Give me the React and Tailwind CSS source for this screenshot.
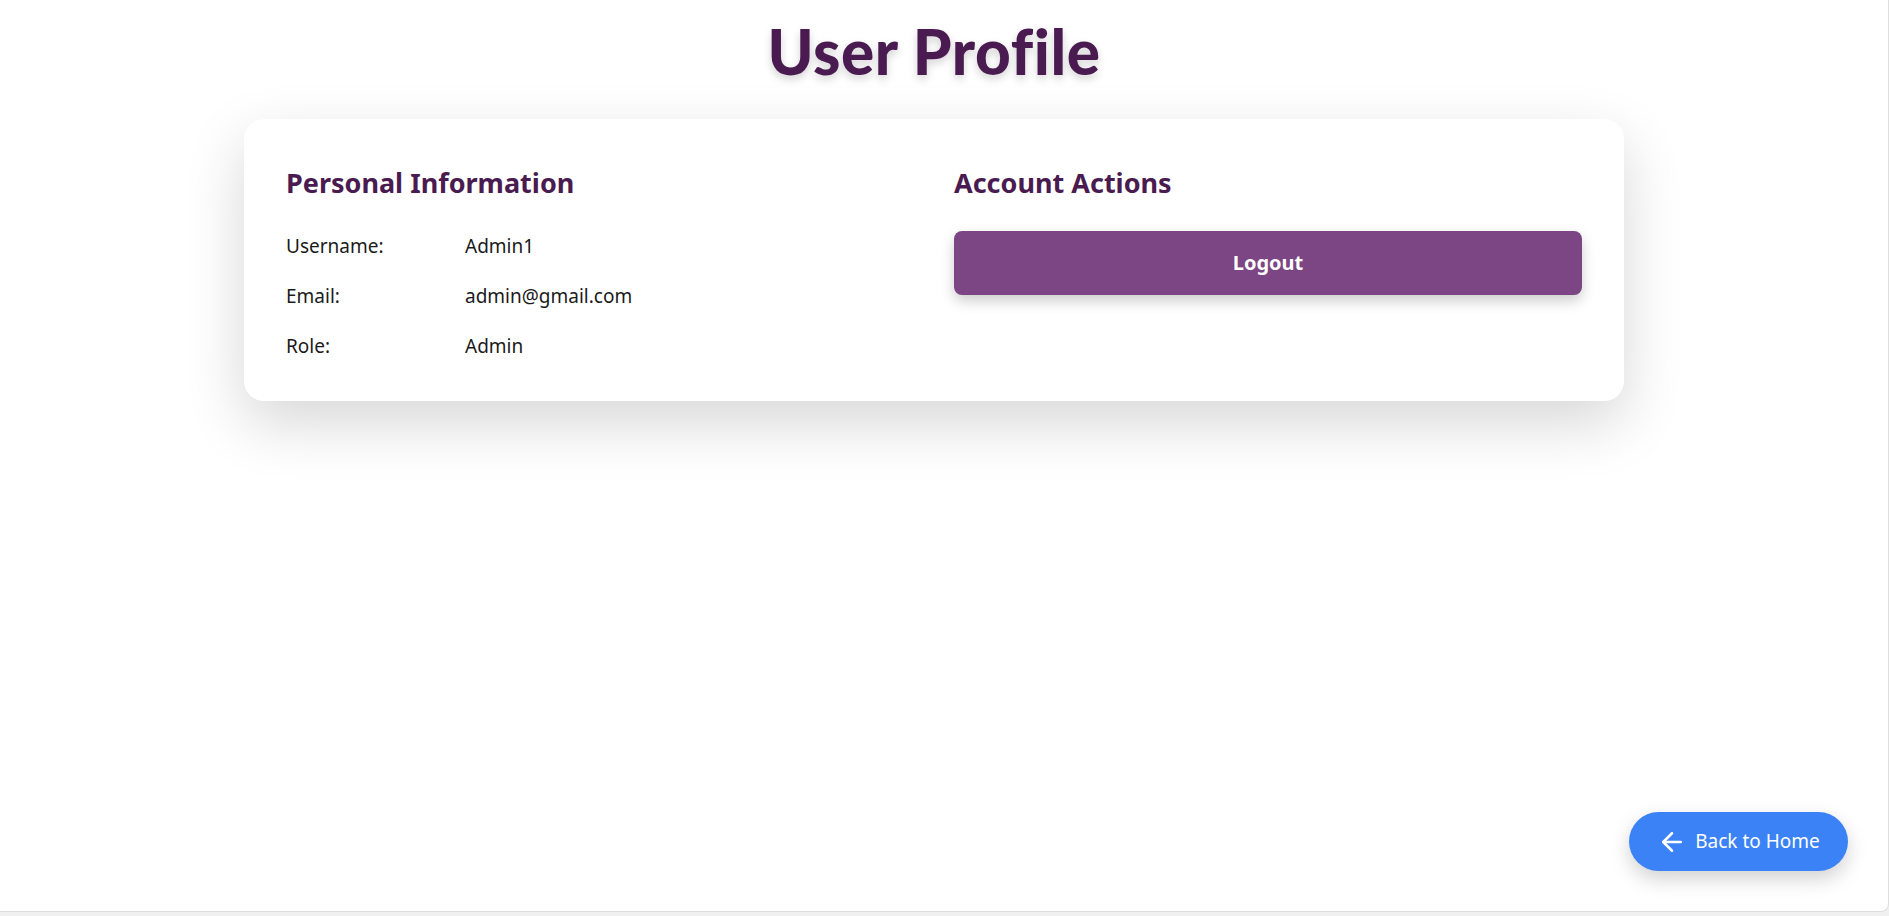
import { ArrowLeft } from "lucide-react";

const user = {
  username: "Admin1",
  email: "admin@gmail.com",
  role: "Admin",
};

function InfoRow({ label, value }) {
  return (
    <div className="flex text-[19px] leading-[28px] text-[#1a1a1a]">
      <span className="w-[179px] shrink-0">{label}</span>
      <span>{value}</span>
    </div>
  );
}

export default function App() {
  const handleLogout = () => {
    console.log("logout");
  };

  return (
    <div className="h-[916px] w-full bg-[#f0f0f0] font-['Noto_Sans',sans-serif]">
      <div className="relative h-[912px] w-[1889px] overflow-hidden rounded-br-lg border-r border-b border-[#dedede] bg-white">
        <div className="flex flex-col items-center pr-5">
          {/* Page title */}
          <h1 className="mt-[20px] font-['Lato',sans-serif] text-[62px] leading-none font-black tracking-[0.6px] text-[#4a1b50] [text-shadow:0_4px_8px_rgba(0,0,0,0.18)]">
            User Profile
          </h1>

          {/* Profile card */}
          <div className="mt-[37px] grid w-[1380px] grid-cols-2 gap-10 rounded-[20px] bg-white px-[42px] pt-[46px] pb-[41px] shadow-[0_22px_60px_rgba(0,0,0,0.16)]">
            <div>
              <h2 className="mb-[32px] text-[27px] leading-[35px] font-bold text-[#4a1b50]">
                Personal Information
              </h2>
              <div className="flex flex-col gap-[22px]">
                <InfoRow label="Username:" value={user.username} />
                <InfoRow label="Email:" value={user.email} />
                <InfoRow label="Role:" value={user.role} />
              </div>
            </div>

            <div>
              <h2 className="mb-[31px] text-[27px] leading-[35px] font-bold text-[#4a1b50]">
                Account Actions
              </h2>
              <button
                type="button"
                onClick={handleLogout}
                className="flex h-[64px] w-full items-center justify-center rounded-lg bg-[#7c4583] text-[20px] font-bold text-white shadow-[0_6px_14px_rgba(0,0,0,0.2)]"
              >
                Logout
              </button>
            </div>
          </div>
        </div>

        {/* Floating back button */}
        <button
          type="button"
          className="absolute right-[40px] bottom-[40px] flex h-[59px] w-[219px] items-center justify-center gap-2 rounded-full bg-[#3b82f6] text-[19px] text-white shadow-[0_8px_20px_rgba(0,0,0,0.18)]"
        >
          <ArrowLeft size={30} strokeWidth={2} />
          <span>Back to Home</span>
        </button>
      </div>
    </div>
  );
}
